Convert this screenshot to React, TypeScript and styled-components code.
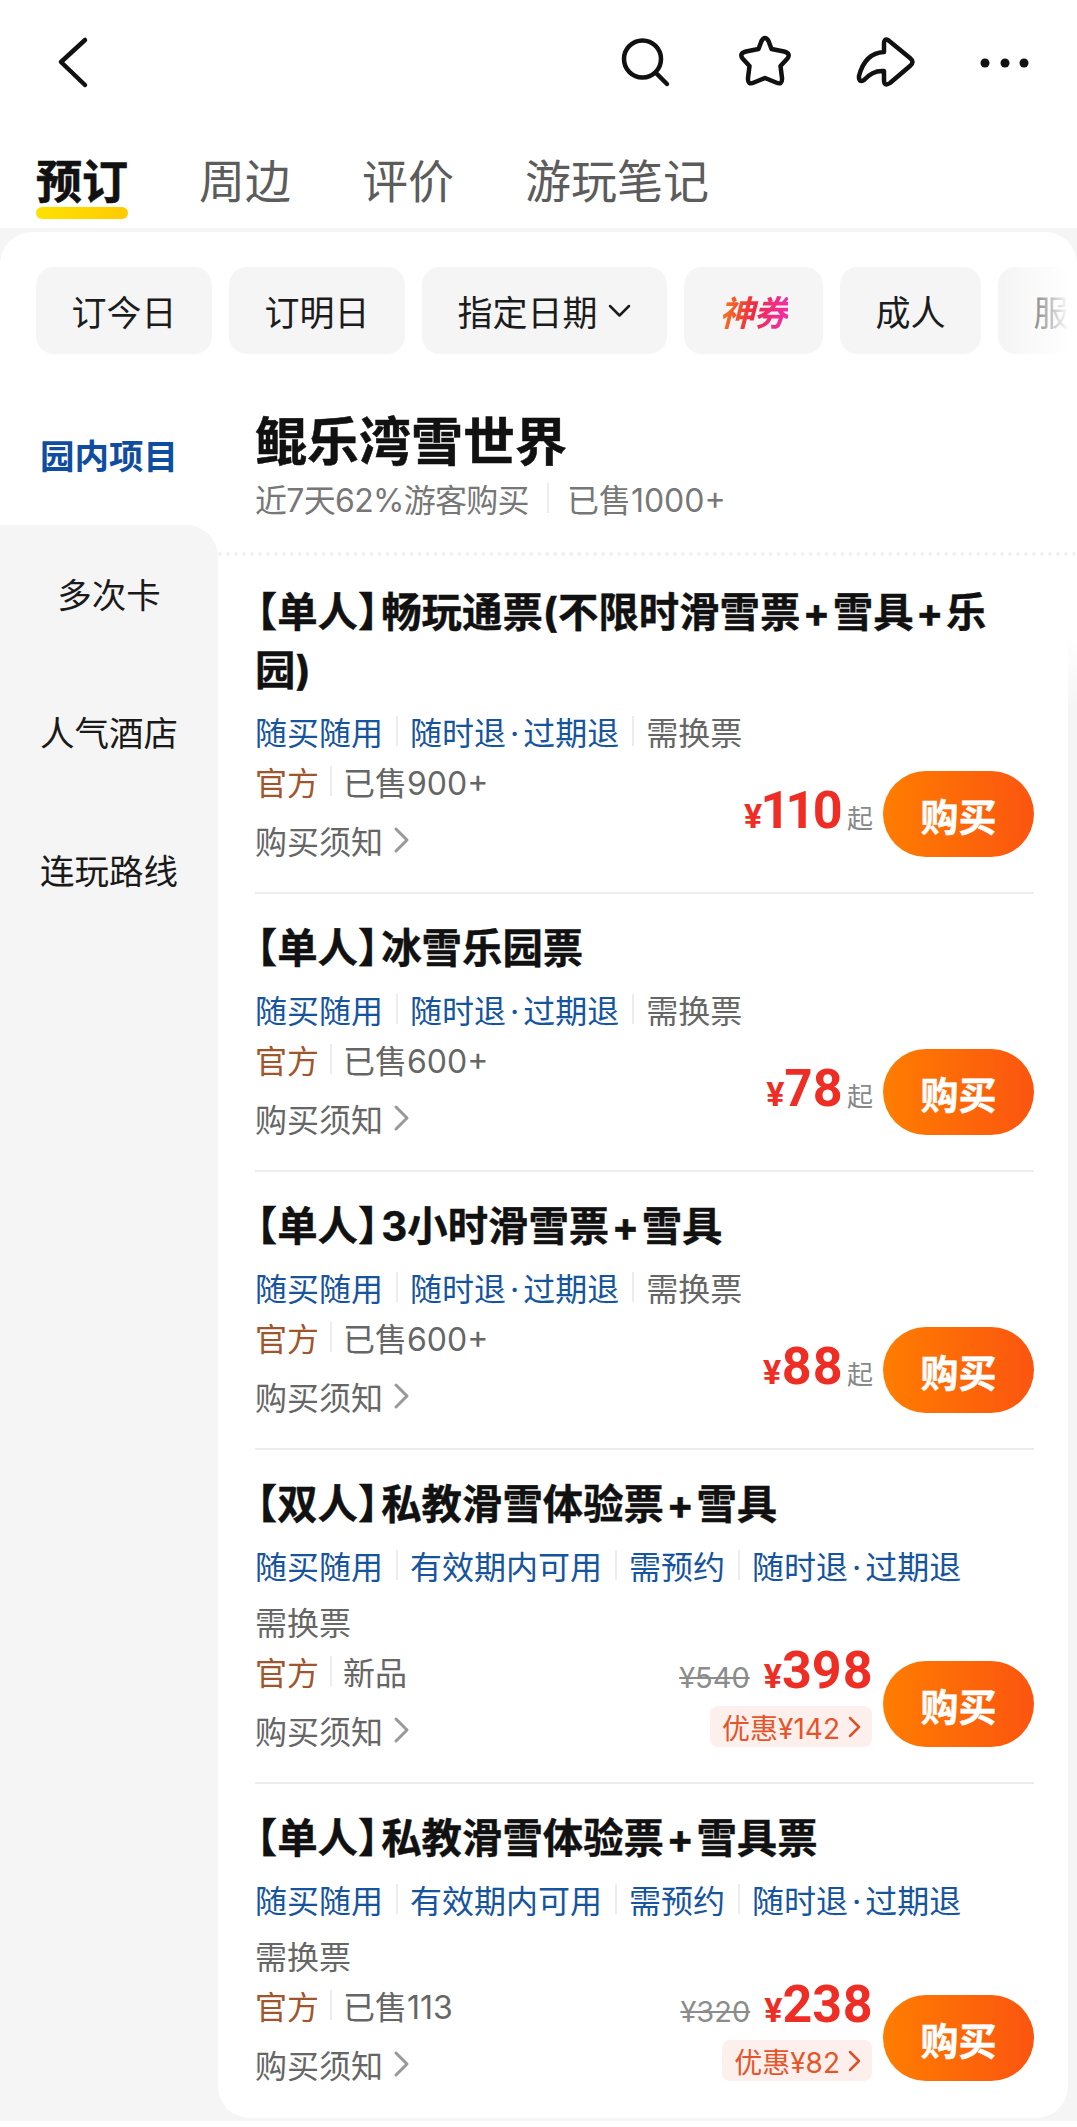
import { Fragment } from 'react'
import styled, { createGlobalStyle } from 'styled-components'

const GlobalStyle = createGlobalStyle`
  html, body {
    margin: 0;
    padding: 0;
    background: #fff;
  }
  body {
    width: 1077px;
    height: 2127px;
    overflow: hidden;
    font-family: Inter, "Noto Sans CJK SC", sans-serif;
    color: #111;
  }
`

const Page = styled.div`
  width: 1077px;
  height: 2121px;
  display: flex;
  flex-direction: column;
`

const TopBar = styled.div`
  display: flex;
  justify-content: space-between;
  padding: 33px 42px 0 43px;
`

const Actions = styled.div`
  display: flex;
  gap: 60px;
`

const TopIcon = styled.svg`
  width: 60px;
  height: 60px;
  display: block;
  fill: none;
  stroke: #111;
  stroke-width: 4.5;
  stroke-linecap: round;
  stroke-linejoin: round;
`

const Tabs = styled.div`
  display: flex;
  gap: 71px;
  padding: 58px 0 0 36px;
  height: 77px;
`

const Tab = styled.div<{ $active?: boolean }>`
  position: relative;
  height: 60px;
  font-size: 46px;
  line-height: 60px;
  font-weight: ${p => (p.$active ? 700 : 400)};
  color: ${p => (p.$active ? '#111' : '#5c5c5c')};

  ${p =>
    p.$active &&
    `-webkit-text-stroke: 0.6px #111;

    &::after {
      content: '';
      position: absolute;
      left: 0;
      right: 0;
      top: 56px;
      height: 12px;
      border-radius: 6px;
      background: linear-gradient(90deg, #ffe100, #ffcb00);
    }`}
`

const SheetBack = styled.div`
  flex: 1;
  display: flex;
  padding-top: 4px;
  background: #f5f5f6;
`

const Sheet = styled.div`
  flex: 1;
  display: flex;
  flex-direction: column;
  min-width: 0;
  background: #fff;
  border-radius: 32px 32px 0 0;
`

const Filters = styled.div`
  position: relative;
  display: flex;
  gap: 17px;
  height: 87px;
  margin: 35px 0 33px;
  padding-left: 36px;
  overflow: hidden;

  &::after {
    content: '';
    position: absolute;
    top: 0;
    right: 0;
    bottom: 0;
    width: 75px;
    background: linear-gradient(90deg, rgba(255, 255, 255, 0), #fff 90%);
  }
`

const Chip = styled.div`
  flex: none;
  display: flex;
  align-items: center;
  gap: 9px;
  padding: 0 35.5px;
  border-radius: 18px;
  background: #f5f5f6;
  font-size: 35px;
  color: #1c1c1c;
`

const CouponChip = styled(Chip)`
  justify-content: center;
  width: 139px;
  padding: 0;
  box-sizing: border-box;
`

const CouponText = styled.span`
  font-size: 35px;
  font-weight: 700;
  font-style: italic;
  letter-spacing: -1px;
  background: linear-gradient(100deg, #f5791c 8%, #ee2b45 50%, #f02fae 95%);
  -webkit-background-clip: text;
  background-clip: text;
  color: transparent;
`

const Content = styled.div`
  flex: 1;
  display: flex;
  min-height: 0;
  background: #f5f5f6;
`

const Side = styled.div`
  flex: none;
  width: 218px;
  display: flex;
  flex-direction: column;
  background: #fff;
`

const SideRest = styled.div`
  flex: 1;
  background: #f5f5f6;
  border-top-right-radius: 32px;
`

const SideItem = styled.div<{ $active?: boolean }>`
  box-sizing: border-box;
  height: 138px;
  padding-bottom: ${p => (p.$active ? 4 : 3)}px;
  display: flex;
  align-items: center;
  justify-content: center;
  font-size: 34.5px;
  font-weight: ${p => (p.$active ? 700 : 400)};
  color: ${p => (p.$active ? '#0f4da1' : '#1a1a1a')};
  background: ${p => (p.$active ? '#fff' : 'transparent')};
`

const Main = styled.div`
  flex: 1;
  min-width: 0;
  display: flex;
  flex-direction: column;
  padding-bottom: 3px;
  background: linear-gradient(180deg, #fff 250px, #f5f5f6 320px);
`

const Head = styled.div`
  padding: 26px 0 34px 37px;
  margin-bottom: 2px;
  background: #fff;
  border-bottom: 4px dotted #f1f1f2;
`

const SpotName = styled.div`
  font-size: 52px;
  line-height: 60px;
  font-weight: 700;
  color: #111;
  -webkit-text-stroke: 0.5px #111;
`

const SpotStats = styled.div`
  display: flex;
  align-items: center;
  margin-top: 5px;
  height: 40px;
  font-size: 32px;
  color: #777;
`

const RecentStat = styled.span`
  letter-spacing: -0.7px;
`

const Sep = styled.span<{ $space?: number }>`
  flex: none;
  width: 2px;
  height: 30px;
  margin: 0 ${p => p.$space ?? 12.5}px;
  background: #ececec;
`

const List = styled.div`
  flex: 1;
  margin-right: 9px;
  padding: 0 34px 0 37px;
  background: #fff;
  border-radius: 0 0 32px 32px;
`

const Item = styled.div`
  padding: 26px 0 26px;
  border-bottom: 2px solid #ececec;

  &:last-child {
    border-bottom: none;
  }
`

const ItemTitle = styled.div`
  max-width: 750px;
  font-size: 40.4px;
  line-height: 58px;
  font-weight: 700;
  color: #111;
  -webkit-text-stroke: 0.4px #111;
`

const OpenBracket = styled.span`
  font-feature-settings: "halt";
  margin-left: 2px;
`

const CloseBracket = styled.span`
  font-feature-settings: "halt";
  margin-right: 3px;
`

const Plus = styled.span`
  margin: 0 2.5px;
`

const Tags = styled.div`
  display: flex;
  flex-wrap: wrap;
  row-gap: 4px;
  margin-top: 5px;
`

const TagCell = styled.div`
  display: flex;
  align-items: center;
  height: 52px;
`

const Tag = styled.span<{ $gray?: boolean }>`
  font-size: 32px;
  color: ${p => (p.$gray ? '#666' : '#16559d')};
`

const TagDot = styled.span`
  margin: 0 4px;
`

const Bottom = styled.div`
  display: flex;
  justify-content: space-between;
  align-items: flex-start;
  margin-top: -2px;
`

const Meta = styled.div`
  display: flex;
  flex-direction: column;
  gap: 7px;
`

const MetaRow = styled.div`
  display: flex;
  align-items: center;
  height: 52px;
  font-size: 32px;
  color: #666;
`

const Official = styled.span`
  color: #a0552c;
`

const NoticeArrow = styled.svg`
  width: 18px;
  height: 30px;
  margin-left: 10px;
  fill: none;
  stroke: #999;
  stroke-width: 3;
  stroke-linecap: round;
  stroke-linejoin: round;
`

const Buy = styled.div`
  display: flex;
  align-items: flex-end;
  gap: 10px;
  height: 86px;
  margin-top: 16px;
`

const PriceBox = styled.div`
  display: flex;
  flex-direction: column;
  align-items: flex-end;
  gap: 10px;
`

const PriceRow = styled.div<{ $plain?: boolean }>`
  display: flex;
  align-items: baseline;
  height: 50px;
  line-height: 50px;
  margin-bottom: ${p => (p.$plain ? '21px' : '0')};
  color: #ee2d24;
  font-family: Roboto, "Noto Sans CJK SC", sans-serif;
  font-weight: 700;
`

const OldPrice = styled.span`
  margin-right: 14px;
  font-family: Inter, sans-serif;
  font-size: 29px;
  font-weight: 400;
  color: #8c8c8c;
  text-decoration: line-through;
`

const Yen = styled.span`
  font-size: 34px;
`

const Amount = styled.span`
  font-size: 52px;
  font-variant-numeric: proportional-nums;
`

const From = styled.span`
  margin-left: 4px;
  font-size: 26px;
  font-weight: 400;
  color: #888;
`

const Discount = styled.div`
  display: flex;
  align-items: center;
  height: 41px;
  margin-right: 1px;
  padding: 0 10px 0 12px;
  border-radius: 8px;
  background: #fdf0ec;
  font-size: 28px;
  color: #e5552b;
`

const DiscountArrow = styled.svg`
  width: 14px;
  height: 22px;
  margin-left: 8px;
  fill: none;
  stroke: #d9502c;
  stroke-width: 2.5;
  stroke-linecap: round;
  stroke-linejoin: round;
`

const BuyButton = styled.button`
  flex: none;
  width: 151px;
  height: 86px;
  padding: 0;
  border: none;
  border-radius: 43px;
  background: linear-gradient(90deg, #ff7d00, #fb5510);
  color: #fff;
  font-family: inherit;
  font-size: 38px;
  font-weight: 700;
  -webkit-text-stroke: 0.5px #fff;
`

interface Ticket {
  kind: string
  name: string
  tags: string[]
  sold: string
  price: string
  oldPrice?: string
  discount?: string
}

const tickets: Ticket[] = [
  {
    kind: '单人',
    name: '畅玩通票(不限时滑雪票+雪具+乐园)',
    tags: ['随买随用', '随时退·过期退'],
    sold: '已售900+',
    price: '110',
  },
  {
    kind: '单人',
    name: '冰雪乐园票',
    tags: ['随买随用', '随时退·过期退'],
    sold: '已售600+',
    price: '78',
  },
  {
    kind: '单人',
    name: '3小时滑雪票+雪具',
    tags: ['随买随用', '随时退·过期退'],
    sold: '已售600+',
    price: '88',
  },
  {
    kind: '双人',
    name: '私教滑雪体验票+雪具',
    tags: ['随买随用', '有效期内可用', '需预约', '随时退·过期退'],
    sold: '新品',
    price: '398',
    oldPrice: '¥540',
    discount: '优惠¥142',
  },
  {
    kind: '单人',
    name: '私教滑雪体验票+雪具票',
    tags: ['随买随用', '有效期内可用', '需预约', '随时退·过期退'],
    sold: '已售113',
    price: '238',
    oldPrice: '¥320',
    discount: '优惠¥82',
  },
]

function TagText({ text }: { text: string }) {
  const parts = text.split('·')
  if (parts.length === 1) return <Tag>{text}</Tag>
  return (
    <Tag>
      {parts[0]}
      <TagDot>·</TagDot>
      {parts[1]}
    </Tag>
  )
}

function TitleName({ name }: { name: string }) {
  const parts = name.split('+')
  return (
    <>
      {parts.map((part, i) => (
        <Fragment key={part}>
          {i > 0 && <Plus>+</Plus>}
          {part}
        </Fragment>
      ))}
    </>
  )
}

function TicketRow({ ticket }: { ticket: Ticket }) {
  // the long tag rows wrap before 需换票, so no separator at the end of the line
  const wraps = ticket.tags.length > 2
  return (
    <Item>
      <ItemTitle>
        <OpenBracket>【</OpenBracket>
        {ticket.kind}
        <CloseBracket>】</CloseBracket>
        <TitleName name={ticket.name} />
      </ItemTitle>
      <Tags>
        {ticket.tags.map((tag, i) => (
          <TagCell key={tag}>
            <TagText text={tag} />
            {!(wraps && i === ticket.tags.length - 1) && <Sep />}
          </TagCell>
        ))}
        <TagCell>
          <Tag $gray>需换票</Tag>
        </TagCell>
      </Tags>
      <Bottom>
        <Meta>
          <MetaRow>
            <Official>官方</Official>
            <Sep $space={11} />
            {ticket.sold}
          </MetaRow>
          <MetaRow>
            购买须知
            <NoticeArrow viewBox="0 0 18 30">
              <path d="M3 4l11 11L3 26" />
            </NoticeArrow>
          </MetaRow>
        </Meta>
        <Buy>
          <PriceBox>
            <PriceRow $plain={!ticket.discount}>
              {ticket.oldPrice && <OldPrice>{ticket.oldPrice}</OldPrice>}
              <Yen>¥</Yen>
              <Amount>{ticket.price}</Amount>
              {!ticket.discount && <From>起</From>}
            </PriceRow>
            {ticket.discount && (
              <Discount>
                {ticket.discount}
                <DiscountArrow viewBox="0 0 14 22">
                  <path d="M2 2l9 9-9 9" />
                </DiscountArrow>
              </Discount>
            )}
          </PriceBox>
          <BuyButton>购买</BuyButton>
        </Buy>
      </Bottom>
    </Item>
  )
}

export default function App() {
  return (
    <Page>
      <GlobalStyle />
      <TopBar>
        <TopIcon viewBox="0 0 60 60">
          <path d="M42 7L18 29l24 23" />
        </TopIcon>
        <Actions>
          <TopIcon viewBox="0 0 60 60">
            <circle cx="27.5" cy="26" r="18.5" />
            <path d="M41 40l11 11" />
          </TopIcon>
          <TopIcon viewBox="0 0 60 60">
            <path d="M23.5 16L26.5 8Q30 2 33.5 8L36.5 16L49 18.5Q56.5 20.5 52 26L45.5 33L47 45Q47.5 52.5 41 49.5L30 45L19 49.5Q12.5 52.5 13 45L14.5 33L8 26Q3.5 20.5 11 18.5Z" />
          </TopIcon>
          <TopIcon viewBox="0 0 60 60">
            <path d="M33 7Q29 5 29 11L29 19Q10 20 4 43Q3.5 50 9 47Q18 37 29 38L29 47Q29 54 35 50L55 33Q60 29 55 25Z" />
          </TopIcon>
          <TopIcon viewBox="0 0 60 60">
            <circle cx="10" cy="30" r="4.5" fill="#111" stroke="none" />
            <circle cx="30" cy="30" r="4.5" fill="#111" stroke="none" />
            <circle cx="49" cy="30" r="4.5" fill="#111" stroke="none" />
          </TopIcon>
        </Actions>
      </TopBar>
      <Tabs>
        <Tab $active>预订</Tab>
        <Tab>周边</Tab>
        <Tab>评价</Tab>
        <Tab>游玩笔记</Tab>
      </Tabs>
      <SheetBack>
        <Sheet>
          <Filters>
            <Chip>订今日</Chip>
            <Chip>订明日</Chip>
            <Chip>
              指定日期
              <svg width="25" height="16" viewBox="0 0 25 16" fill="none" stroke="#1c1c1c" strokeWidth="2.5" strokeLinecap="round" strokeLinejoin="round">
                <path d="M3 3l9.5 9.5L22 3" />
              </svg>
            </Chip>
            <CouponChip>
              <CouponText>神券</CouponText>
            </CouponChip>
            <Chip>成人</Chip>
            <Chip>服务</Chip>
          </Filters>
          <Content>
            <Side>
              <SideItem $active>园内项目</SideItem>
              <SideRest>
                <SideItem>多次卡</SideItem>
                <SideItem>人气酒店</SideItem>
                <SideItem>连玩路线</SideItem>
              </SideRest>
            </Side>
            <Main>
              <Head>
                <SpotName>鲲乐湾雪世界</SpotName>
                <SpotStats>
                  <RecentStat>近7天62%游客购买</RecentStat>
                  <Sep $space={18} />
                  已售1000+
                </SpotStats>
              </Head>
              <List>
                {tickets.map(ticket => (
                  <TicketRow key={ticket.name} ticket={ticket} />
                ))}
              </List>
            </Main>
          </Content>
        </Sheet>
      </SheetBack>
    </Page>
  )
}
